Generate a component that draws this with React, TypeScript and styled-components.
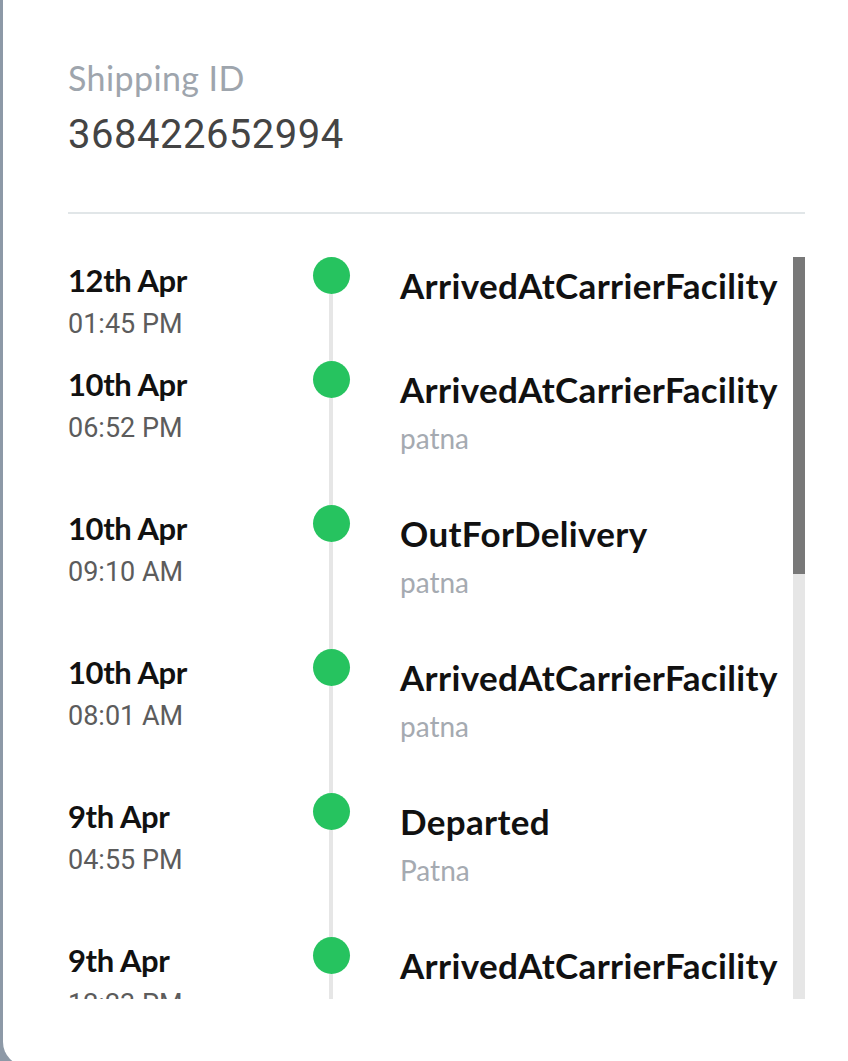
import styled, { createGlobalStyle } from 'styled-components';

const GlobalStyle = createGlobalStyle`
  html, body {
    margin: 0;
    padding: 0;
    height: 100%;
    overflow: hidden;
    background: #8d99a7;
  }
  #root {
    height: 100%;
  }
`;

const Card = styled.div`
  margin-left: 3px;
  height: 1066px;
  background: #fff;
  border-bottom-left-radius: 24px;
  padding: 58px 43px 0 65px;
  box-sizing: border-box;
  display: flex;
  flex-direction: column;
`;

const Label = styled.div`
  font-family: Lato, 'Noto Sans', sans-serif;
  font-size: 34px;
  line-height: 40px;
  letter-spacing: 0.4px;
  color: #9ea5ad;
`;

const ShippingId = styled.div`
  margin-top: 14px;
  font-family: Roboto, 'Liberation Sans', sans-serif;
  font-size: 40px;
  line-height: 46px;
  letter-spacing: 0.5px;
  color: #444;
`;

const Divider = styled.hr`
  margin: 54px 0 0;
  border: none;
  height: 2px;
  background: #e1e6e8;
`;

const Timeline = styled.div`
  margin-top: 43px;
  height: 742px;
  display: flex;
`;

const List = styled.div`
  flex: 1;
  overflow: hidden;
`;

// drawn scrollbar (headless browser hides the native one)
const ScrollTrack = styled.div`
  width: 12px;
  flex: none;
  background: #e6e6e6;
`;

const ScrollThumb = styled.div`
  height: 317px;
  background: #787878;
`;

const Row = styled.div<{ $tall: boolean }>`
  display: grid;
  grid-template-columns: 244px 38px 1fr;
  min-height: ${(p) => (p.$tall ? 144 : 104)}px;
`;

const When = styled.div`
  padding-top: 5px;
  display: flex;
  flex-direction: column;
`;

const DateText = styled.div`
  font-family: Lato, 'Noto Sans', sans-serif;
  font-weight: 700;
  font-size: 31px;
  line-height: 36px;
  letter-spacing: -0.4px;
  color: #111;
`;

const TimeText = styled.div`
  margin-top: 10px;
  font-family: Roboto, 'Liberation Sans', sans-serif;
  font-size: 27px;
  line-height: 32px;
  color: #5c5c5c;
`;

const Track = styled.div`
  display: flex;
  flex-direction: column;
  align-items: center;
`;

const Dot = styled.div`
  width: 37px;
  height: 37px;
  border-radius: 50%;
  background: #26c35f;
  flex: none;
`;

const Line = styled.div`
  flex: 1;
  width: 4px;
  background: #e6e6e6;
`;

const Details = styled.div`
  padding: 8px 0 0 50px;
`;

const Status = styled.div`
  font-family: Lato, 'Noto Sans', sans-serif;
  font-weight: 700;
  font-size: 35px;
  line-height: 40px;
  letter-spacing: 0.35px;
  color: #111;
  white-space: nowrap;
`;

const Place = styled.div`
  margin-top: 13px;
  font-family: Lato, 'Noto Sans', sans-serif;
  font-size: 28px;
  line-height: 32px;
  color: #a5aab1;
`;

const events = [
  { date: '12th Apr', time: '01:45 PM', status: 'ArrivedAtCarrierFacility', place: '' },
  { date: '10th Apr', time: '06:52 PM', status: 'ArrivedAtCarrierFacility', place: 'patna' },
  { date: '10th Apr', time: '09:10 AM', status: 'OutForDelivery', place: 'patna' },
  { date: '10th Apr', time: '08:01 AM', status: 'ArrivedAtCarrierFacility', place: 'patna' },
  { date: '9th Apr', time: '04:55 PM', status: 'Departed', place: 'Patna' },
  { date: '9th Apr', time: '12:23 PM', status: 'ArrivedAtCarrierFacility', place: 'Patna' },
  { date: '9th Apr', time: '09:40 AM', status: 'Departed', place: 'Kolkata' },
];

export default function App() {
  return (
    <>
      <GlobalStyle />
      <Card>
        <Label>Shipping ID</Label>
        <ShippingId>368422652994</ShippingId>
        <Divider />
        <Timeline>
          <List>
            {events.map((e, i) => (
              <Row key={i} $tall={!!e.place}>
                <When>
                  <DateText>{e.date}</DateText>
                  <TimeText>{e.time}</TimeText>
                </When>
                <Track>
                  <Dot />
                  <Line />
                </Track>
                <Details>
                  <Status>{e.status}</Status>
                  {e.place && <Place>{e.place}</Place>}
                </Details>
              </Row>
            ))}
          </List>
          <ScrollTrack>
            <ScrollThumb />
          </ScrollTrack>
        </Timeline>
      </Card>
    </>
  );
}
